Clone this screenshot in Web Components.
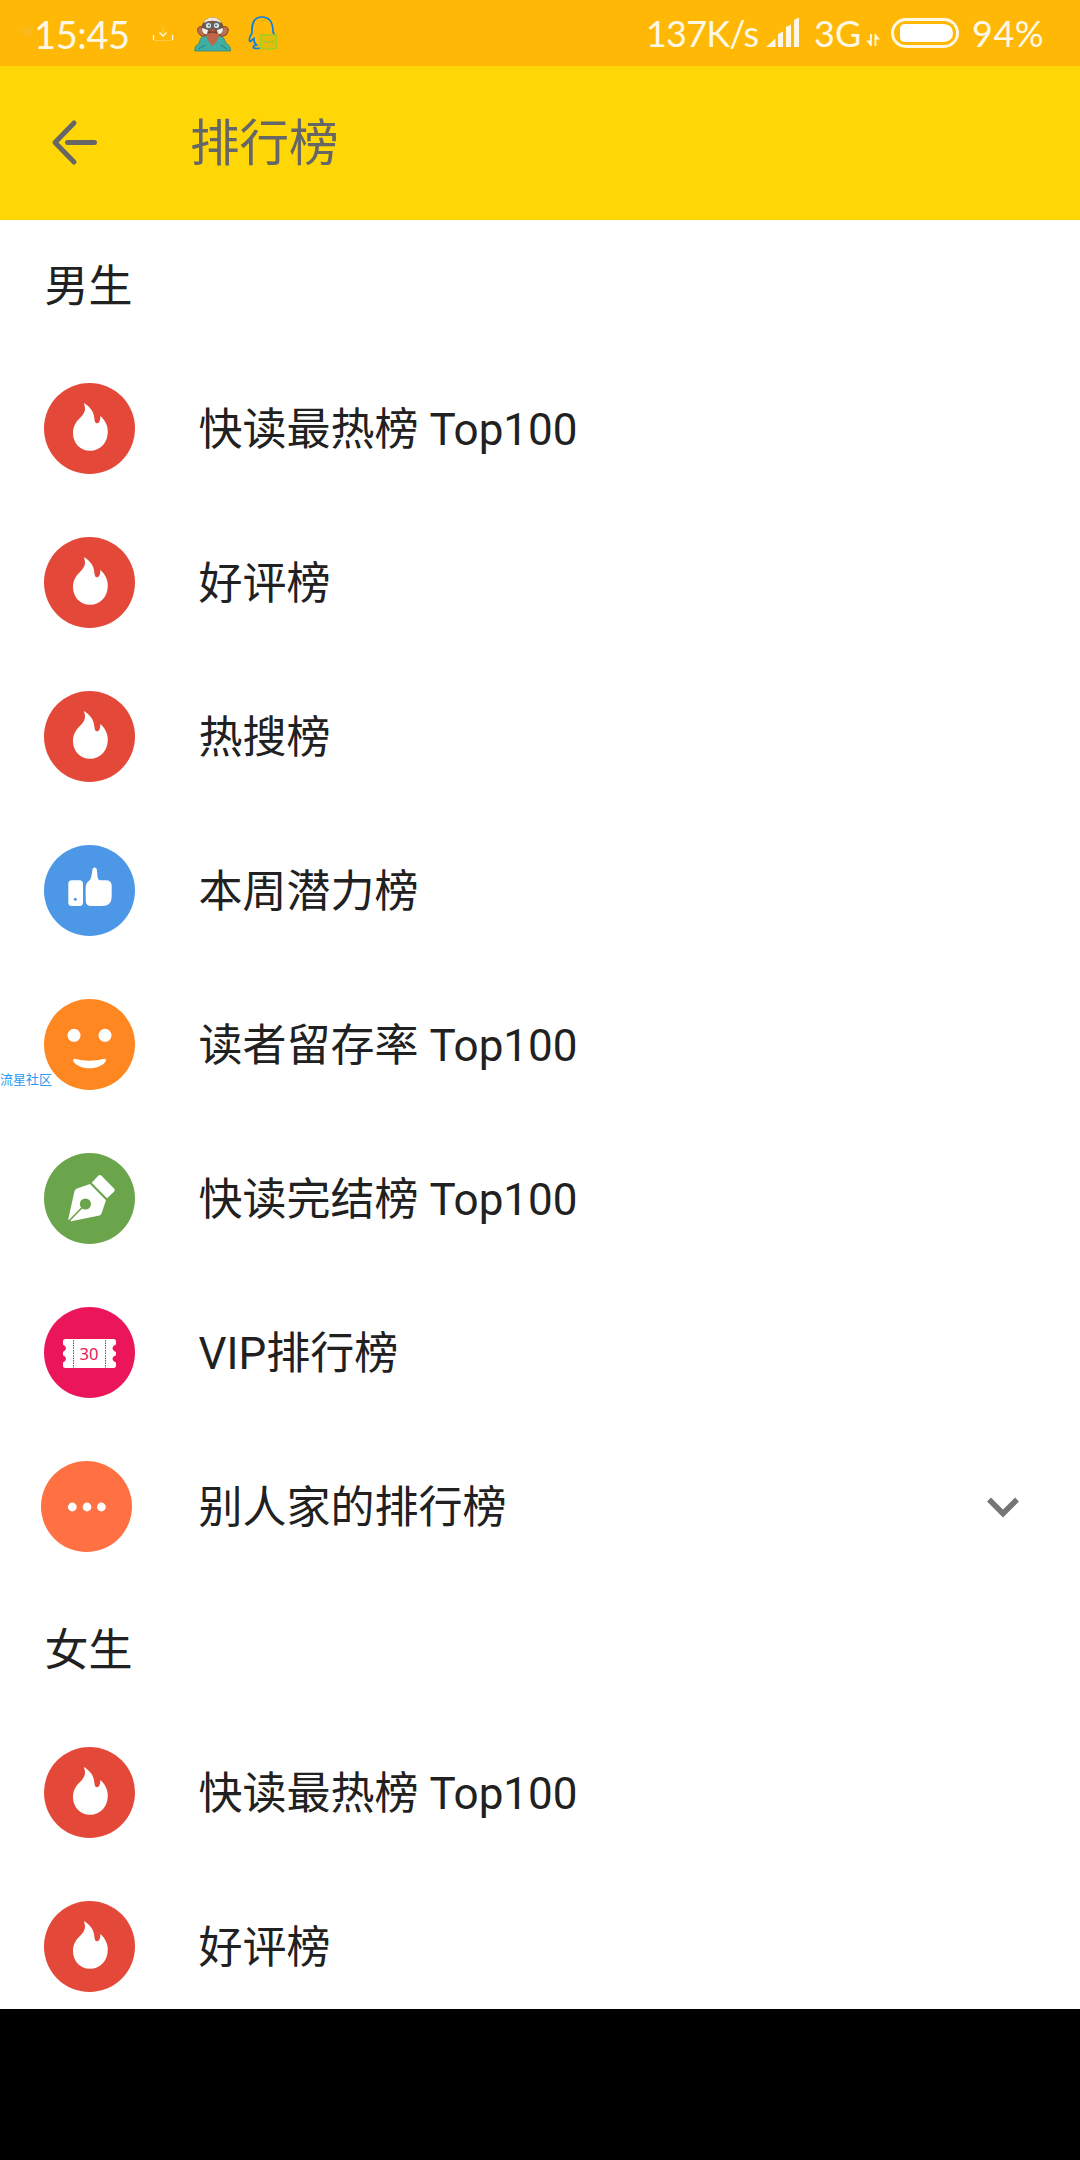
<!DOCTYPE html>
<html lang="zh-CN">
<head>
<meta charset="utf-8">
<title>排行榜</title>
<style>
html,body{margin:0;background:#000}
body{width:1080px;height:2160px;overflow:hidden;font-family:Roboto,"Noto Sans CJK SC",sans-serif;color:#212121}
</style>
</head>
<body>
<rank-app>
  <status-bar slot="top"></status-bar>
  <app-bar slot="top">排行榜</app-bar>
  <rank-section label="男生">
    <rank-row icon="fire">快读最热榜 Top100</rank-row>
    <rank-row icon="fire">好评榜</rank-row>
    <rank-row icon="fire">热搜榜</rank-row>
    <rank-row icon="thumb">本周潜力榜</rank-row>
    <rank-row icon="smile">读者留存率 Top100</rank-row>
    <rank-row icon="pen">快读完结榜 Top100</rank-row>
    <rank-row icon="ticket">VIP排行榜</rank-row>
    <rank-row icon="more" expandable>别人家的排行榜</rank-row>
  </rank-section>
  <rank-section label="女生">
    <rank-row icon="fire">快读最热榜 Top100</rank-row>
    <rank-row icon="fire">好评榜</rank-row>
  </rank-section>
  <water-mark slot="mark">流星社区</water-mark>
</rank-app>
<script>
const define = (name, render) => customElements.define(name, class extends HTMLElement {
  connectedCallback() {
    if (!this.shadowRoot) this.attachShadow({mode: 'open'}).innerHTML = render(this);
  }
});

const ICONS = {
  fire: ['#e34838', '<path d="M40 20C46 24 49.700 28 50.300 35C50.600 38.500 51.200 40.300 53 40.300C55.300 40.300 56.500 37 56.300 33C59.500 35.500 63.800 41 63.800 48.500C63.800 59.500 56.500 67.800 46.200 67.800C36 67.800 29 60 29 50C29 44 31.500 39.500 35 36C38.500 32.400 40.500 30 41 26.500C41.200 24 40.200 22 40 20Z"/>'],
  thumb: ['#4c98e7', '<rect x="24.300" y="35.300" width="14.700" height="25.700" rx="3.500"/><circle cx="31.300" cy="54.300" r="1.500" fill="#4c98e7"/><path d="M48.500 24.500C49 21.700 52.300 21.700 52.800 24.500L53.600 32Q54 35.300 56.500 35.300H62Q67.700 35.300 67.700 41V51.500Q67.700 61 58 61H47.500Q41.700 61 41.700 55.500V41Q41.700 38.300 44.500 36.300C47.500 34 47.300 31.500 48.500 24.500Z"/>'],
  smile: ['#ff8722', '<circle cx="30" cy="36.300" r="6.500"/><circle cx="61" cy="36.300" r="6.500"/><path d="M30.500 59.700Q45.500 63.700 60.500 59.700Q62.500 59.600 61.700 62.200C59 66.500 53 69.200 45.500 69.200C38 69.200 32 66.500 29.300 62.200Q28.600 59.400 30.500 59.700Z"/>'],
  pen: ['#6aa54b', '<path d="M24.200 66.500L30.500 38Q31 36.300 33 35.500L46 31L62 47.300L57.500 60.500Q57 62 55.500 62.500L27.200 68.200Z"/><circle cx="41.400" cy="51" r="5.600" fill="#6aa54b"/><path d="M41 51.500L25 68" stroke="#6aa54b" stroke-width="1.700"/><path d="M47.700 29.800L54.200 22.800Q55.800 21.200 57.500 22.800L70 35.500Q71.500 37.200 70 38.700L63 45.300Z"/>'],
  ticket: ['#eb1659', '<path d="M21.500 32H69.500Q72 32 72 34.500V37.500Q68.500 39 68.500 41.300Q68.500 43.600 72 45V48.300Q68.500 49.600 68.500 51.800Q68.500 54 72 55.500V58.500Q72 61 69.500 61H21.500Q19 61 19 58.500V55.500Q22 54 22 51.800Q22 49.600 19 48.300V45Q22 43.600 22 41.300Q22 39 19 37.500V34.500Q19 32 21.500 32Z"/><path d="M29.500 33V61M61.500 33V61" stroke="#eb1659" stroke-dasharray="1.500 1"/><text x="44.900" y="52.700" text-anchor="middle" font-family="Noto Sans" font-size="16.500" fill="#eb1659">30</text>'],
  more: ['#ff7043', '<circle cx="31.300" cy="46" r="4.400"/><circle cx="46" cy="46" r="4.400"/><circle cx="60.400" cy="46" r="4.400"/>']
};

define('rank-app', () => `
<style>
:host{display:block;height:2160px;position:relative;background:#000}
main{height:2009px;overflow:hidden;background:#fff;display:flex;flex-direction:column}
</style><main><slot name="top"></slot><slot></slot></main><slot name="mark"></slot>`);

define('status-bar', () => `
<style>
:host{display:flex;flex:none;align-items:center;height:66px;box-sizing:border-box;padding:0 35px 0 22px;background:#ffb805;color:#fff8e6;font:36px/66px Lato,sans-serif}
svg{display:block;flex:none}
.dot{width:10px;height:10px;border-radius:50%;background:#fbb91f;margin-right:2px;margin-top:-4px}
.time{font-size:38px;width:97px;margin-right:20px;letter-spacing:-.4px;white-space:nowrap;padding-top:1px}
.end{margin-left:auto;display:flex;align-items:center}
span{white-space:nowrap;padding-top:0}
</style>
<i class="dot"></i><span class="time">15:45</span>
<svg width="24" height="66"><g fill="none"><path d="M3 40.500H21" stroke="#ffc940"/><path d="M2.500 35V40M21.500 35V40" stroke="#fff8e6" stroke-width="1.300"/><path d="M12 26V36" stroke="#ffce4e"/><path d="M8.500 32.500L12 36L15.500 32.500" stroke="#fff8e6" stroke-width="1.300"/></g></svg>
<svg width="38" height="66" style="margin-left:19px">
<path d="M1 51C0 47 2.500 45 5 43.500C6 38 8 35.500 13 35H25C29 36 30.500 39 32 43.500C35 45 37 47 36.500 51Z" fill="#3eafa2" stroke="#39867b" stroke-width=".8"/>
<path d="M4.500 49L11 45M33 49L27 45" stroke="#2b8c83" stroke-width="1.200"/>
<path d="M9 27C3 25 2 31 6 35Q9 38 12 35M28 27C35 25 36 31 32 35Q28 38 25 35" fill="#c0704b" stroke="#7b4931"/>
<path d="M8 29C8 14 29 14 29 29Q28 37 18.500 38Q9 37 8 29Z" fill="#87513c" stroke="#55483d" stroke-width=".8"/>
<path d="M9.500 23C12 15.500 25 15.500 27.500 23Q18.500 18.500 9.500 23Z" fill="#eee5dc"/>
<path d="M8 28Q8 35 13 34L14 30ZM29 28Q29 35 24 34L23 30Z" fill="#f4f0ed"/>
<circle cx="14.500" cy="25.500" r="3.200" fill="#d4e2e5" stroke="#59656d" stroke-width="1.200"/><circle cx="22.500" cy="25.500" r="3.200" fill="#d4e2e5" stroke="#59656d" stroke-width="1.200"/>
<circle cx="15" cy="25.500" r=".9" fill="#376879"/><circle cx="22" cy="25.500" r=".9" fill="#376879"/>
<path d="M18.500 29Q16 33 12 34Q12 39 18.500 46Q24 41 26 34Q21 33 18.500 29Z" fill="#bd6748"/><path d="M14 33Q18.500 31 23 33" stroke="#71402f" stroke-width="1.500" fill="none"/>
</svg>
<svg width="34" height="66" style="margin-left:15px"><path d="M13 48Q10 49 6.500 48Q5.500 46 9.500 45Q6.500 43 7 38.500L3 41.500Q1 39 5 33Q4 17 15 17Q26 17 26 32L27.500 35" fill="none" stroke="#087eea" stroke-width="1.700"/><path d="M13.500 35H29.500V48.500H24L22 50L20 48.500H13.500Z" fill="#c0c31b" fill-opacity=".45" stroke="#a3cc22" stroke-width="1.500"/><path d="M16.500 41.800H27" stroke="#94c921" stroke-width="2" stroke-dasharray="2 2"/></svg>
<div class="end">
<span style="width:113px;margin-right:7px;letter-spacing:-.8px">137K/s</span>
<svg width="34" height="66" fill="#fff8e6"><path d="M0 47L9.500 38.500V47ZM12 47V34L17 31.500V47ZM20 47V27L25 24.500V47ZM28 47V20L33 17.500V47Z"/></svg>
<span style="width:50px;margin-left:14px">3G</span>
<svg width="15" height="66" fill="#fff8e6" style="margin-left:2px"><path d="M4 34H5.800V46H4.500L0 40.500H4ZM8.500 46H10.300V39.500H14L9.500 34H8.500Z"/></svg>
<svg width="68" height="66" style="margin-left:10px"><rect x="1.500" y="19.500" width="65" height="27" rx="13.500" fill="none" stroke="#fff8e6" stroke-width="3"/><path d="M14 24H53Q62 25 62 33Q62 41 53 42H14Q9 42 9 37V29Q9 24 14 24Z" fill="#fff"/></svg>
<span style="width:73px;margin-left:13px;letter-spacing:.5px">94%</span>
</div>`);

define('app-bar', () => `
<style>
:host{display:flex;flex:none;align-items:center;height:154px;padding-left:50px;background:#ffd707;color:#666;font-size:49.500px;line-height:60px}
svg{display:block;margin-right:91px}
span{padding-top:2px}
</style>
<svg width="49" height="50" fill="none" stroke="#666" stroke-width="5" stroke-linecap="round" stroke-linejoin="round"><path d="M24 5L5 24.500L24 44M17.500 24.500H44.500"/></svg><span><slot></slot></span>`);

define('rank-section', el => `
<style>
:host{display:block;flex:none}
h2{margin:0;height:132px;padding-left:44.500px;font-weight:400;font-size:44px;line-height:134px}
</style><h2>${el.getAttribute('label')}</h2><slot></slot>`);

define('rank-icon', el => {
  const [color, art] = ICONS[el.getAttribute('name')];
  return `<style>:host{display:block;width:91px;height:91px;border-radius:50%;background:${color}}svg{display:block}</style>
<svg width="91" height="91" fill="#fff">${art}</svg>`;
});

define('rank-row', el => `
<style>
:host{display:flex;align-items:center;height:154px;box-sizing:border-box;padding:0 58px 1px 44px;font-size:44px;line-height:60px}
:host([icon=more]){padding-left:41px}
:host([icon=more]) span{margin-left:66.500px}
span{flex:1;margin-left:63.500px;padding-top:2px}
</style>
<rank-icon name="${el.getAttribute('icon')}"></rank-icon><span><slot></slot></span>
${el.hasAttribute('expandable') ? '<svg width="38" height="24" fill="none" stroke="#757575" stroke-width="5.500"><path d="M5 4.500L19 18.500L33 4.500"/></svg>' : ''}`);

define('water-mark', () => `
<style>:host{position:absolute;left:0;top:1071px;font-size:13px;line-height:18px;color:#2a9bf0}</style><slot></slot>`);
</script>
</body>
</html>
